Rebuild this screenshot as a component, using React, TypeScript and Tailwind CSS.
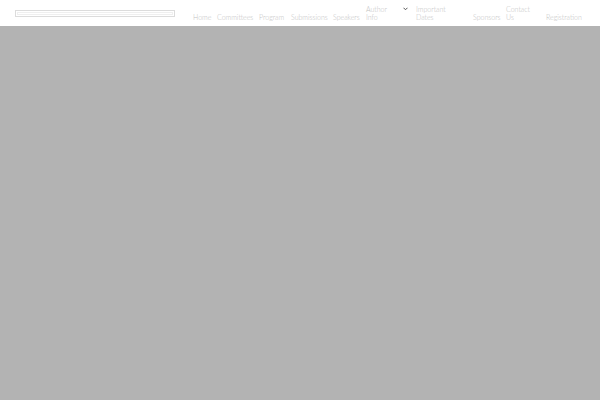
import React from "react";

const navItems: { label: string; width: string; dropdown?: boolean }[] = [
  { label: "Home", width: "w-[24px]" },
  { label: "Committees", width: "w-[42px]" },
  { label: "Program", width: "w-[32px]" },
  { label: "Submissions", width: "w-[42px]" },
  { label: "Speakers", width: "w-[33px]" },
  { label: "Author Info", width: "w-[50px]", dropdown: true },
  { label: "Important Dates", width: "w-[57px]" },
  { label: "Sponsors", width: "w-[33px]" },
  { label: "Contact Us", width: "w-[40px]" },
  { label: "Registration", width: "w-[40px]" },
];

const App: React.FC = () => {
  return (
    <div className="w-[600px] h-[400px] flex flex-col bg-[#b3b3b3] font-['Lato',sans-serif]">
      <header className="h-[26px] bg-white flex items-start shrink-0">
        {/* logo placeholder */}
        <div className="ml-[15px] mt-[10px] w-[160px] h-[7px] border border-[#dcdcdc] p-[1px] bg-white">
          <div className="w-full h-full border border-[#efefef]" />
        </div>
        <nav className="ml-[18px] flex items-start h-full">
          {navItems.map((item) => (
            <div
              key={item.label}
              className={`${item.width} h-full flex items-end pb-[5px] text-[7px] leading-[7.5px] font-light text-[#c2c2c2]`}
            >
              {item.dropdown ? (
                <div className="flex w-full items-start justify-between pr-[8px]">
                  <span className="w-[24px]">{item.label}</span>
                  <svg
                    width="5"
                    height="4"
                    viewBox="0 0 10 8"
                    className="mt-[1px]"
                  >
                    <path
                      d="M1 1.5 L5 5.5 L9 1.5"
                      stroke="#555"
                      strokeWidth="2"
                      fill="none"
                    />
                  </svg>
                </div>
              ) : item.label === "Important Dates" ? (
                <span className="w-[34px]">{item.label}</span>
              ) : item.label === "Contact Us" ? (
                <span className="w-[26px]">{item.label}</span>
              ) : (
                <span className="whitespace-nowrap">{item.label}</span>
              )}
            </div>
          ))}
        </nav>
      </header>
      <main className="flex-1 bg-[#b3b3b3]" />
    </div>
  );
};

export default App;
